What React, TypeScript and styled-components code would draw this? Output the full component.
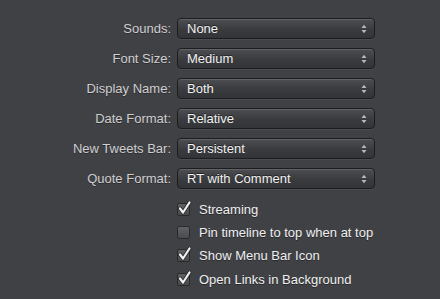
import styled, { createGlobalStyle } from 'styled-components';

const Global = createGlobalStyle`
  html, body {
    margin: 0;
    background: #404145;
  }
  body {
    font-family: "Liberation Sans", Arial, sans-serif;
    font-size: 13px;
  }
`;

const Panel = styled.div`
  width: 440px;
  height: 299px;
  background: #404145;
  box-sizing: border-box;
  padding-top: 18px;
  display: grid;
  grid-template-columns: 171px 198px;
  column-gap: 6px;
  row-gap: 9px;
  align-content: start;
`;

const Label = styled.div`
  color: #cfcfd0;
  text-align: right;
  line-height: 21px;
  text-shadow: 0 1px 0 rgba(0, 0, 0, 0.35);
`;

const Popup = styled.div`
  height: 21px;
  box-sizing: border-box;
  border: 1px solid #1d1d1f;
  border-radius: 4px;
  background: linear-gradient(#4d4e51, #3a3b3e 55%, #333437);
  box-shadow: inset 0 1px 0 rgba(255, 255, 255, 0.12), 0 1px 0 rgba(255, 255, 255, 0.06);
  display: flex;
  align-items: center;
  justify-content: space-between;
  padding: 0 7px 0 9px;
  color: #f2f2f2;
  text-shadow: 0 -1px 0 rgba(0, 0, 0, 0.5);
`;

const Checks = styled.div`
  grid-column: 2;
  display: flex;
  flex-direction: column;
  gap: 7.4px;
  margin-top: 3px;
  width: 210px;
`;

const CheckRow = styled.div`
  display: flex;
  align-items: center;
  gap: 9px;
  color: #efefef;
  height: 16px;
  text-shadow: 0 1px 0 rgba(0, 0, 0, 0.4);
`;

const Box = styled.div`
  position: relative;
  width: 13px;
  height: 13px;
  box-sizing: border-box;
  border: 1px solid #2a2a2c;
  border-radius: 2px;
  background: linear-gradient(#606164, #4a4b4e);
  flex-shrink: 0;
`;

const Tick = styled.svg`
  position: absolute;
  left: 0px;
  top: -3px;
`;

function Arrows() {
  return (
    <svg width="6" height="10" viewBox="0 0 6 10">
      <path d="M0.5 4 L3 0.8 L5.5 4 Z" fill="#b8b8ba" />
      <path d="M0.5 6 L3 9.2 L5.5 6 Z" fill="#b8b8ba" />
    </svg>
  );
}

function Check({ on, label }: { on: boolean; label: string }) {
  return (
    <CheckRow>
      <Box>
        {on && (
          <Tick width="14" height="14" viewBox="0 0 14 14">
            <path
              d="M2 7.5 L5 11.5 L11.5 1.5"
              fill="none"
              stroke="#2a2a2c"
              strokeWidth="3.8"
              strokeLinecap="round"
              strokeLinejoin="round"
            />
            <path
              d="M2 7.5 L5 11.5 L11.5 1.5"
              fill="none"
              stroke="#f2f2f2"
              strokeWidth="2.2"
              strokeLinecap="round"
              strokeLinejoin="round"
            />
          </Tick>
        )}
      </Box>
      {label}
    </CheckRow>
  );
}

const rows = [
  ['Sounds:', 'None'],
  ['Font Size:', 'Medium'],
  ['Display Name:', 'Both'],
  ['Date Format:', 'Relative'],
  ['New Tweets Bar:', 'Persistent'],
  ['Quote Format:', 'RT with Comment'],
];

export default function App() {
  return (
    <>
      <Global />
      <Panel>
        {rows.map(([label, value]) => (
          <>
            <Label key={label + 'l'}>{label}</Label>
            <Popup key={label + 'p'}>
              {value}
              <Arrows />
            </Popup>
          </>
        ))}
        <Checks>
          <Check on label="Streaming" />
          <Check on={false} label="Pin timeline to top when at top" />
          <Check on label="Show Menu Bar Icon" />
          <Check on label="Open Links in Background" />
        </Checks>
      </Panel>
    </>
  );
}
